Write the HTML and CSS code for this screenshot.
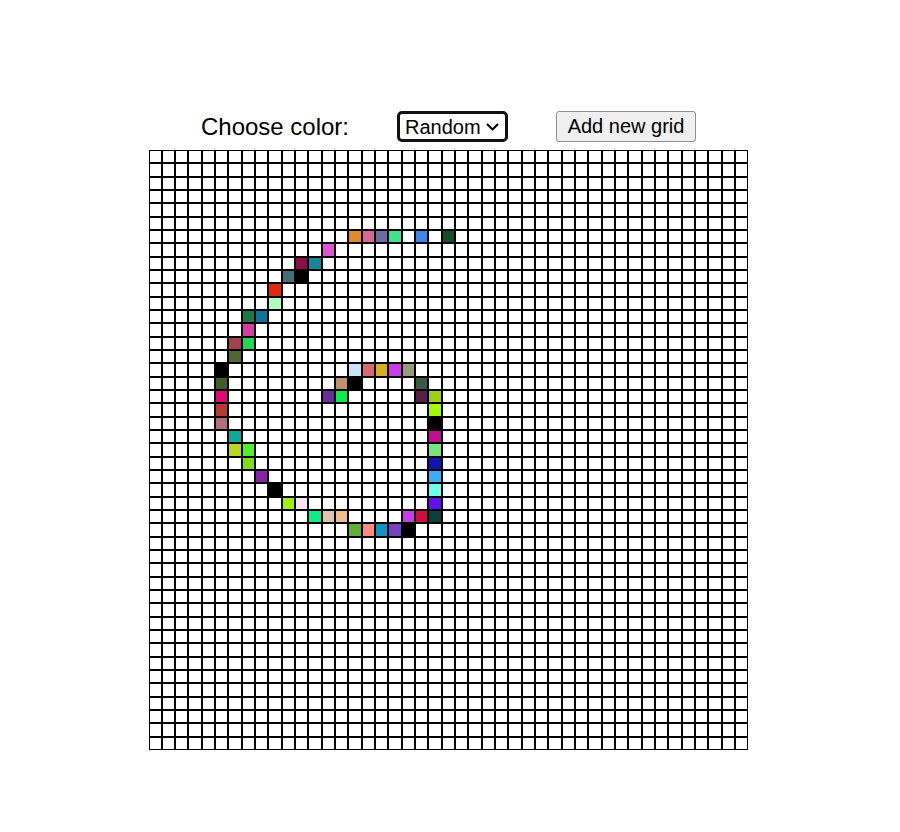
FILE: index.html
```html
<!DOCTYPE html>
<html lang="en">
<head>
    <meta charset="UTF-8">
    <meta name="viewport" content="width=device-width, initial-scale=1.0">
    <title>Etch a Sketch</title>
    <link rel="stylesheet" href="styles.css">
</head>
<body>
    <div class="container">
        <div class="controls">
            <label for="colorMode" class="color-label">Choose color:</label>
            <div class="select-wrap">
                <select id="colorMode" class="color-select">
                    <option value="random">Random</option>
                    <option value="black">Black</option>
                </select>
                <svg class="chevron" width="13" height="8" viewBox="0 0 13 8">
                    <path d="M1.5 1.5 L6.5 6.5 L11.5 1.5" fill="none" stroke="#000" stroke-width="2" stroke-linecap="round" stroke-linejoin="round"/>
                </svg>
            </div>
            <button type="button" class="new-grid">Add new grid</button>
        </div>
        <div id="grid" class="grid"></div>
    </div>

    <script>
        const size = 45;

        // cells already painted: row -> { col: color }
        const painted = {
            6: { 15: "#e08a2a", 16: "#d6679a", 17: "#6b6ca6", 18: "#3ce68e", 20: "#3f86ea", 22: "#1a4e2b" },
            7: { 13: "#e055d4" },
            8: { 11: "#8a0f45", 12: "#1a8599" },
            9: { 10: "#456e75", 11: "#000000" },
            10: { 9: "#e02a10" },
            11: { 9: "#adffc0" },
            12: { 7: "#1e7a45", 8: "#0a75a0" },
            13: { 7: "#d33fa0" },
            14: { 6: "#a6404c", 7: "#22d658" },
            15: { 6: "#4e6630" },
            16: { 5: "#000000", 15: "#c8e2fa", 16: "#d86a6e", 17: "#d6ae1e", 18: "#c73ee8", 19: "#999a7a" },
            17: { 5: "#3f5e2a", 14: "#c0926c", 15: "#000000", 20: "#3a5a3e" },
            18: { 5: "#de0a78", 13: "#6a2e9c", 14: "#0aec4a", 20: "#5a1e42", 21: "#9ed018" },
            19: { 5: "#b43a32", 21: "#a6f80a" },
            20: { 5: "#b86a7e", 21: "#000000" },
            21: { 6: "#10a89a", 21: "#c0108e" },
            22: { 6: "#bcd61e", 7: "#52f02a", 21: "#78e47e" },
            23: { 7: "#7ae214", 21: "#1018aa" },
            24: { 8: "#8a22a6", 21: "#3aaef8" },
            25: { 9: "#000000", 21: "#6effe8" },
            26: { 10: "#a0f00e", 11: "#f8e2f4", 21: "#6410e8" },
            27: { 12: "#08ee88", 13: "#dec4ae", 14: "#eebc90", 19: "#c33ee8", 20: "#d0103a", 21: "#0c3e3a" },
            28: { 15: "#62b038", 16: "#fc8a7e", 17: "#1094c0", 18: "#7444c0", 19: "#000000" }
        };

        const grid = document.getElementById("grid");

        for (let r = 0; r < size; r++) {
            for (let c = 0; c < size; c++) {
                const cell = document.createElement("div");
                cell.className = "cell";
                if (painted[r] && painted[r][c]) {
                    cell.style.backgroundColor = painted[r][c];
                }
                grid.appendChild(cell);
            }
        }
    </script>
</body>
</html>
```

FILE: styles.css
```css
* {
    margin: 0;
    padding: 0;
    box-sizing: border-box;
}

body {
    font-family: "Liberation Sans", Arial, sans-serif;
    background-color: #fff;
}

.container {
    display: flex;
    flex-direction: column;
    align-items: center;
    padding-top: 111px;
    padding-right: 3px;
    gap: 8px;
}

.controls {
    display: flex;
    align-items: center;
    gap: 48px;
    height: 31px;
}

.color-label {
    font-size: 24px;
    color: #000;
}

.select-wrap {
    position: relative;
}

.color-select {
    appearance: none;
    -webkit-appearance: none;
    display: block;
    font-family: inherit;
    font-size: 20px;
    width: 111px;
    height: 31px;
    padding: 0 0 0 5px;
    border: 3px solid #111;
    border-radius: 5px;
    background-color: #fff;
    color: #000;
}

.chevron {
    position: absolute;
    right: 9px;
    top: 12px;
    pointer-events: none;
}

.new-grid {
    font-family: inherit;
    font-size: 20px;
    width: 140px;
    height: 31px;
    background-color: #efefef;
    border: 1px solid #8f8f8f;
    border-radius: 3px;
    color: #000;
}

.grid {
    display: grid;
    grid-template-columns: repeat(45, 1fr);
    width: 600px;
    height: 600px;
}

.cell {
    border: 1px solid #000;
    background-color: #fff;
}
```
